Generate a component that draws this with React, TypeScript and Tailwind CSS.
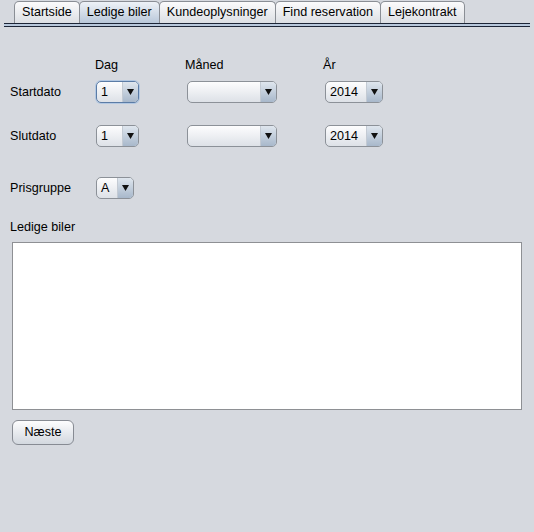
import { ReactNode } from 'react'

const tabs = ['Startside', 'Ledige biler', 'Kundeoplysninger', 'Find reservation', 'Lejekontrakt']
const active = 'Ledige biler'

function Combo({ value, width, focused }: { value: string; width: string; focused?: boolean }) {
  return (
    <div
      className={`flex h-[22px] ${width} overflow-hidden rounded-[5px] border ${focused ? 'border-[#5b7ca6] shadow-[0_0_0_1px_#b3c8e2]' : 'border-[#8c9198]'} bg-gradient-to-b from-[#fdfdfe] to-[#dde1e7]`}
    >
      <div className="flex flex-1 items-center pl-[4px] leading-none text-black">{value}</div>
      <div className="flex w-[16px] items-center justify-center border-l border-[#c3cad3] bg-gradient-to-b from-[#dfe6ee] to-[#a8b8cb]">
        <svg width="7" height="6" viewBox="0 0 7 6">
          <path d="M0 0h7L3.5 6z" fill="#111" />
        </svg>
      </div>
    </div>
  )
}

function Row({ label, children, className = '' }: { label: string; children: ReactNode; className?: string }) {
  return (
    <div className={`flex items-center ${className}`}>
      <div className="w-[86px] text-black">{label}</div>
      {children}
    </div>
  )
}

export default function App() {
  return (
    <div className="min-h-screen w-full bg-[#d6d9df] font-['Liberation_Sans',Arial,sans-serif] text-[12.6px] text-black">
      <div className="flex h-[23px] items-end pl-[14px] pt-[1px]">
        {tabs.map((t) => (
          <div
            key={t}
            className={`-mr-px flex h-[22px] items-center rounded-t-[5px] border border-b-0 border-[#8a8e95] px-[7px] ${t === active ? 'bg-gradient-to-b from-[#eef2f7] to-[#b9c8da]' : 'bg-gradient-to-b from-[#fbfbfc] to-[#dcdfe4]'}`}
          >
            {t}
          </div>
        ))}
      </div>
      <div className="mx-[4px] h-[4px] border-y border-[#1c2537] bg-[#b8c8dc]" />

      <div className="pl-[10px] pt-[30px]">
        <div className="flex h-[16px] items-center pl-[85px]">
          <div className="w-[90px]">Dag</div>
          <div className="w-[138px]">Måned</div>
          <div>År</div>
        </div>
        <Row label="Startdato" className="mt-[8px]">
          <div className="w-[91px]">
            <Combo value="1" width="w-[43px]" focused />
          </div>
          <div className="w-[138px]">
            <Combo value="" width="w-[90px]" />
          </div>
          <Combo value="2014" width="w-[58px]" />
        </Row>
        <Row label="Slutdato" className="mt-[22px]">
          <div className="w-[91px]">
            <Combo value="1" width="w-[43px]" />
          </div>
          <div className="w-[138px]">
            <Combo value="" width="w-[90px]" />
          </div>
          <Combo value="2014" width="w-[58px]" />
        </Row>
        <Row label="Prisgruppe" className="mt-[30px]">
          <Combo value="A" width="w-[38px]" />
        </Row>
        <div className="mt-[21px] h-[14px] leading-[14px]">Ledige biler</div>
      </div>

      <div className="px-[12px] pt-[8px]">
        <div className="h-[168px] w-[510px] border border-[#8e9094] bg-white" />
        <button className="mt-[10px] h-[25px] w-[62px] rounded-[6px] border border-[#878b93] bg-gradient-to-b from-[#fdfdfe] to-[#d3d8df] text-black">
          Næste
        </button>
      </div>
    </div>
  )
}
